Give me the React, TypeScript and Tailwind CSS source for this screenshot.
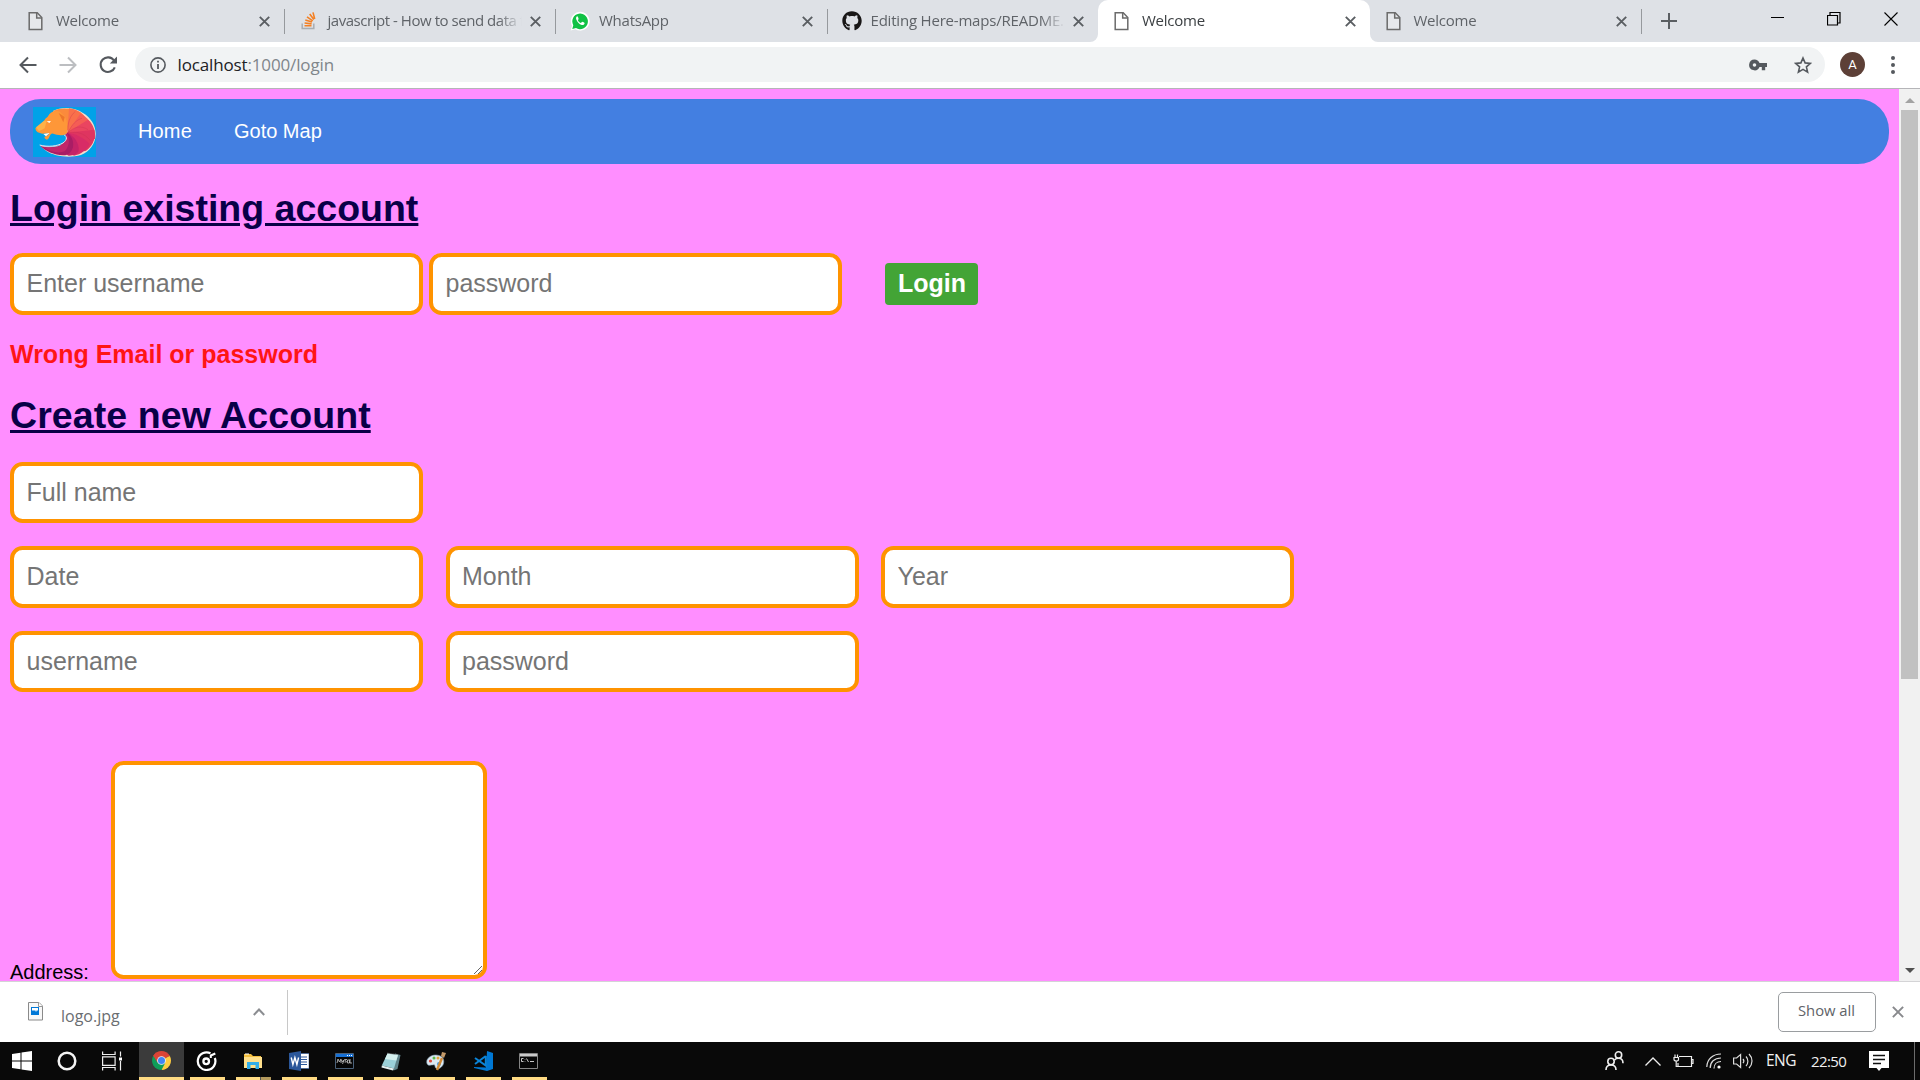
import React from "react";
import { FaGithub } from "react-icons/fa";

const Doc = ({ dark = false }: { dark?: boolean }) => (
  <svg className="-ml-[4px]" width="20" height="20" viewBox="0 0 20 20" fill={dark ? "#fff" : "#e6e8eb"} stroke="#6b6b6b" strokeWidth="1.5">
    <path d="M3.2 1.7h8l4.6 4.8v12H3.2z" />
    <path d="M10.700 1.700v5.200h5" fill="none" />
  </svg>
);

const Close = ({ size = 11, color = "#5a5e62", w = 1.9 }: { size?: number; color?: string; w?: number }) => (
  <svg width={size} height={size} viewBox="0 0 11 11" stroke={color} strokeWidth={w}>
    <path d="M.8.8l9.4 9.4M10.2.8L.8 10.2" />
  </svg>
);

const StackIcon = () => (
  <svg className="-ml-px" width="16" height="18" viewBox="0 0 16 18" fill="none">
    <path d="M1.2 11.5v5h11.6v-5" stroke="#a9adb1" strokeWidth="1.5" />
    <path d="M3.5 13.8h7M3.6 11l7 .9M4.3 8l6.7 2.1M6 4.8l5.8 4M8.7 2l4.2 5.6M12 .4l1.7 6.6" stroke="#f48024" strokeWidth="1.6" />
  </svg>
);

type TabProps = { icon: React.ReactNode; title: string; active?: boolean; sep?: boolean; track?: string };

function Tab({ icon, title, active, sep, track = "tracking-[-0.25px]" }: TabProps) {
  return (
    <div className={`relative flex h-[42px] w-[271.5px] shrink-0 items-center pl-[15px] ${active ? "rounded-t-[10px] bg-white" : ""}`}>
      <span className="flex w-[22px] justify-center">{icon}</span>
      <span
        className={`ml-[2px] h-[22px] w-[199.500px] overflow-hidden pl-[5px] text-[15px] leading-[21px] whitespace-nowrap ${track} ${active ? "text-[#3c4043]" : "text-[#5f6368]"} [mask-image:linear-gradient(to_right,black_88%,transparent_100%)]`}
      >
        {title}
      </span>
      <span className="ml-[8px]"><Close /></span>
      {sep && <span className="absolute top-[9px] -right-px h-[25px] w-px bg-[#96999d]" />}
      {active && (
        <>
          <svg className="absolute bottom-0 -left-[8px]" width="8" height="8"><path d="M8 0v8H0a8 8 0 0 0 8-8z" fill="#fff" /></svg>
          <svg className="absolute -right-[8px] bottom-0" width="8" height="8"><path d="M0 0v8h8a8 8 0 0 1-8-8z" fill="#fff" /></svg>
        </>
      )}
    </div>
  );
}

function TabStrip() {
  return (
    <div className="flex h-[42px] bg-[#dee1e6] pl-[12px]">
      <Tab icon={<Doc />} title="Welcome" sep />
      <Tab icon={<StackIcon />} title="javascript - How to send data from" sep track="tracking-[-0.46px]" />
      <Tab
        icon={
          <svg className="-ml-[2px]" width="20" height="20" viewBox="0 0 20 20">
            <path d="M.6 19.6L2 14.8A9.4 9.4 0 1 1 5.4 18.3z" fill="#fff" />
            <path d="M2.3 17.9l1-3.7a7.8 7.8 0 1 1 2.7 2.8z" fill="#11c245" />
            <path d="M7 5.3c-1 .8-1.2 2-.6 3.4 1 2.5 2.900 4.400 5.300 5.200 1.400.4 2.700-.2 2.900-1.700.1-.6-2.100-1.600-2.500-1.400-.5.3-.8 1.200-1.300 1.100-1.300-.4-2.400-1.500-3-2.700.1-.5.800-.8.800-1.300C8.500 7.200 7.900 5.200 7 5.300z" fill="#fff" />
          </svg>
        }
        title="WhatsApp"
        sep
      />
      <Tab icon={<FaGithub size={20} color="#191717" className="-ml-[2px]" />} title="Editing Here-maps/README.md" track="tracking-[-0.2px]" />
      <Tab icon={<Doc dark />} title="Welcome" active />
      <Tab icon={<Doc />} title="Welcome" sep />
      <svg className="mt-[13px] ml-[20px]" width="16" height="16" stroke="#5a5e62" strokeWidth="2"><path d="M8 0v16M0 8h16" /></svg>
      <svg className="mt-[17px] ml-auto" width="13" height="1"><path d="M0 .5h13" stroke="#000" /></svg>
      <svg className="mt-[12px] ml-[43px]" width="14" height="14" fill="none" stroke="#000">
        <path d="M.5 3.500h10v9.500h-10zM3 3.500v-3h10v10.500h-2.500" strokeWidth="1.200" />
      </svg>
      <svg className="mt-[12px] mr-[22px] ml-[43px]" width="14" height="14" stroke="#000" strokeWidth="1.1"><path d="M.5.5l13 13M13.500.5l-13 13" /></svg>
    </div>
  );
}

function Toolbar() {
  return (
    <div className="flex h-[47px] items-center border-b border-[#b5b5b8] bg-white">
      <svg className="mt-[-1px] ml-[19px]" width="18" height="18" fill="none" stroke="#55595e" strokeWidth="2"><path d="M17.500 9H2M9 1.500L1.500 9 9 16.500" /></svg>
      <svg className="mt-[-1px] ml-[22px]" width="18" height="18" fill="none" stroke="#bcbec1" strokeWidth="2"><path d="M.5 9H16M9 1.500L16.500 9 9 16.500" /></svg>
      <svg className="mt-[-1px] ml-[22px]" width="19" height="18" viewBox="0 0 19 18">
        <path d="M15.800 11.300A7.300 7.300 0 1 1 15 4.500" fill="none" stroke="#55595e" strokeWidth="2.100" />
        <path d="M18 .5v7h-7.200z" fill="#55595e" />
      </svg>
      <div className="mt-[-1px] ml-[17px] flex h-[35px] w-[1690px] items-center rounded-full bg-[#f1f3f4] pl-[15px]">
        <svg width="16" height="16" fill="none" stroke="#55595e"><circle cx="8" cy="8" r="7.100" strokeWidth="1.600" /><path d="M8 3.800v1.800M8 7v5" strokeWidth="1.800" /></svg>
        <span className="ml-[11.5px] text-[17px] leading-[24px] tracking-[-0.14px] text-[#80868b]">
          <span className="text-[#202124]">localhost</span>:1000/login
        </span>
        <svg className="ml-auto" width="18" height="12" viewBox="0 0 18 12" fill="#55595e">
          <path fillRule="evenodd" d="M5.500.5a5.400 5.400 0 1 0 5 7.500h2.300v3.300h3.400V8H18V4h-7.500a5.400 5.400 0 0 0-5-3.500zm0 3.700a1.800 1.800 0 1 1 0 3.600 1.800 1.800 0 0 1 0-3.600z" />
        </svg>
        <svg className="mr-[13px] ml-[27px]" width="18" height="18" viewBox="0 0 18 18" fill="none" stroke="#55595e" strokeWidth="1.600">
          <path d="M9 2l2.100 4.900 5.300.5-4 3.500 1.200 5.200L9 13.400l-4.600 2.700 1.200-5.200-4-3.500 5.300-.5z" />
        </svg>
      </div>
      <div className="mt-[-1px] ml-[15px] flex size-[25px] items-center justify-center rounded-full bg-[#5d4037] font-[Roboto] text-[13px] text-white">A</div>
      <div className="mt-[-1px] ml-[26px] flex flex-col gap-[3px]">
        <i className="size-[4px] rounded-full bg-[#55595e]" />
        <i className="size-[4px] rounded-full bg-[#55595e]" />
        <i className="size-[4px] rounded-full bg-[#55595e]" />
      </div>
    </div>
  );
}

const Lion = () => (
  <svg width="63" height="50" viewBox="0 0 189 150" className="bg-[#00a2e8]">
    <path d="M60 12C85-2 125 0 150 18c25 14 40 42 38 66-1 26-18 50-44 60-36 10-80 4-104-12-10-7-16-12-18-17 20 7 50 6 66-3 14-8 16-20 10-28L70 50z" fill="#f6dccb" />
    <path d="M60 12C85 0 122 3 145 18l-10 30-35 25z" fill="#fb8a3c" />
    <path d="M108 4c25 2 45 18 50 30l-30 30-25 15z" fill="#f9704b" />
    <path d="M142 20c22 10 34 28 38 45l-40 20-38-7z" fill="#f55d55" />
    <path d="M165 38c17 14 23 36 21 58l-44 8-40-27z" fill="#ea4560" />
    <path d="M184 68c7 33-13 57-29 65l-30-20-22-36z" fill="#df3560" />
    <path d="M170 111c-8 17-26 32-48 35l-14-28-5-41c25 3 50 15 67 34z" fill="#d82c66" />
    <path d="M103 77c22 12 36 30 34 55-4 9-16 14-30 14l-30-18z" fill="#c42368" />
    <path d="M103 77c14 12 20 26 17 44-5 16-16 25-30 24-26-2-54-12-68-29 22 8 52 6 67-4 14-9 16-22 8-30z" fill="#a91d65" />
    <path d="M103 80c9 22 4 40-8 53-20 8-46 0-66-14 20 5 48 3 61-7 14-9 16-22 7-29z" fill="#c2266a" />
    <path d="M105 78c18-20 40-23 60-10M105 78c10-25 26-40 42-44M105 78c27-7 52 2 68 24M105 78c-2-30 5-50 22-65" fill="none" stroke="#c8304e" strokeWidth="2" opacity=".5" />
    <path d="M20 114c25 7 52 4 70-6 14-9 14-24-5-27-14 0-24 8-34 17l-16 2-27-8v18z" fill="#00a2e8" />
    <path d="M20 114c25 7 52 4 70-6 14-9 14-23-3-27" fill="none" stroke="#f3e4ea" strokeWidth="3" />
    <path d="M44 29C52 14 68 8 78 13c10 6 13 12 18 16 9 16 5 34 7 48-9 9-18 9-25 7-12 0-18-6-22-4-8 4-4 12-14 18-5-1-7-3-8-8l13-7c-4-6-12-2-19-3l-14-4c-5-4-6-7-7-13 13-4 22-14 30-28z" fill="#fe9738" />
    <path d="M9 61l24-20 8 1-6 22-17 9z" fill="#ffb148" />
    <path d="M41 43l13-1-5 6zM31 81l19-3-11 10z" fill="#fff" />
    <path d="M77 18l18 12-4 16z" fill="#ed762b" />
  </svg>
);

function Field({ placeholder, className = "h-[62px]" }: { placeholder: string; className?: string }) {
  return (
    <input
      placeholder={placeholder}
      className={`block w-[413px] shrink-0 rounded-[12.5px] border-4 border-[#ff9300] bg-white px-[12.5px] pb-[1px] text-[25px] placeholder:text-[#757575] ${className}`}
    />
  );
}

function Page() {
  return (
    <div className="flex h-[892px] font-['Liberation_Sans',sans-serif]">
      <main className="h-[892px] w-[1899px] overflow-hidden bg-[#ff8eff] pt-[10px] pl-[10px] text-[20px] text-black">
        <nav className="flex h-[65px] w-[1879px] items-center rounded-[31px] bg-[#437fe1] pl-[23px] text-white">
          <Lion />
          <a className="mt-[-1px] ml-[42px] tracking-[0.15px]">Home</a>
          <a className="mt-[-1px] ml-[42px]">Goto Map</a>
        </nav>
        <h1 className="mt-[22px] h-[44px] text-[37.5px] leading-[44px] font-bold text-[#090047] underline">Login existing account</h1>
        <div className="mt-[23px] flex items-center">
          <Field placeholder="Enter username" />
          <Field placeholder="password" className="ml-[6px] h-[62px]" />
          <button className="ml-[43px] h-[42px] w-[93px] rounded-[4px] bg-[#43a436] pb-[1px] pl-[1px] text-[25px] leading-[41px] font-bold text-white">Login</button>
        </div>
        <p className="mt-[25px] h-[28px] text-[25px] leading-[28px] font-bold text-[#ff1515]">Wrong Email or password</p>
        <h1 className="mt-[25px] h-[44px] text-[37.5px] leading-[44px] font-bold tracking-[0.09px] text-[#090047] underline">Create new Account</h1>
        <Field placeholder="Full name" className="mt-[25px] h-[61px]" />
        <div className="mt-[23px] flex gap-[22.5px]">
          <Field placeholder="Date" />
          <Field placeholder="Month" />
          <Field placeholder="Year" />
        </div>
        <div className="mt-[23px] flex gap-[22.5px]">
          <Field placeholder="username" className="h-[61px]" />
          <Field placeholder="password" className="h-[61px]" />
        </div>
        <div className="mt-[69px] flex items-end">
          <span className="mb-[-5px] w-[101px] leading-[23px]">Address:</span>
          <div className="flex h-[218px] w-[376px] items-end justify-end rounded-[12.5px] border-4 border-[#ff9300] bg-white">
            <svg className="mr-[1px] mb-[1px]" width="8" height="8" stroke="#555" strokeWidth=".9"><path d="M0 8L8 0M4 8L8 4" /></svg>
          </div>
        </div>
      </main>
      <div className="flex w-[21px] flex-col items-center bg-[#f1f1f1]">
        <svg className="mt-[9px]" width="10" height="5"><path d="M0 5L5 0l5 5z" fill="#a3a3a3" /></svg>
        <div className="mt-[7px] h-[569px] w-[17px] bg-[#c1c1c1]" />
        <svg className="mt-auto mb-[8px]" width="10" height="5"><path d="M0 0l5 5 5-5z" fill="#505050" /></svg>
      </div>
    </div>
  );
}

function DownloadBar() {
  return (
    <div className="flex h-[61px] items-center border-t border-[#d4d4d6] bg-white">
      <svg className="ml-[28px] self-start translate-y-[20px]" width="15" height="19" viewBox="0 0 15 19">
        <path d="M.5.5h10.500l3.500 3.500v14H.5z" fill="#f8f8f8" stroke="#8a8a8a" />
        <path d="M10.500.5v4h4" fill="#fff" stroke="#999" />
        <path d="M3 5h8v8H3z" fill="#0078d7" />
        <path d="M4 6h6v3l-1-1-1 2-1-2-1 1-1-1-1 1z" fill="#fff" />
      </svg>
      <span className="mt-[7px] ml-[18px] w-[62px] text-[16px] leading-[24px] text-[#6a6d71]">logo.jpg</span>
      <svg className="ml-[130px]" width="12" height="8" fill="none" stroke="#8b8d91" strokeWidth="2"><path d="M.8 7L6 1.500 11.200 7" /></svg>
      <span className="ml-[22px] h-[45px] w-px bg-[#c8c8c8]" />
      <button className="mb-px ml-auto h-[40px] w-[98px] rounded-[5px] border border-[#9a9da0] pr-px pb-[2px] text-[14.800px] text-[#5f6368]">Show all</button>
      <span className="mr-[16px] ml-[16px]"><Close size={12} color="#88898c" w={1.8} /></span>
    </div>
  );
}

function TaskApp({ children, last = false, half = false }: { children: React.ReactNode; last?: boolean; half?: boolean }) {
  return (
    <div className={`flex h-[38px] w-[35px] flex-col items-center justify-between ${last ? "" : "mr-[11px]"}`}>
      <div className="flex h-[35px] items-center pt-[3px] pr-[2px]">{children}</div>
      <div className="flex h-[3px] w-full bg-[#ffdb83]">{half && <i className="ml-auto h-[3px] w-[11px] border-l border-[#555] bg-[#b49a5d]" />}</div>
    </div>
  );
}

function Taskbar() {
  return (
    <div className="flex h-[38px] items-center bg-[#090909] text-[#f0f0f0]">
      <svg className="ml-[12px]" width="20" height="20" fill="#fff"><path d="M0 3l8.500-1.200v7.700H0zM9.500 1.600L20 0v9.500H9.500zM0 10.500h8.500v7.700L0 17zM9.500 10.500H20V20L9.500 18.400z" /></svg>
      <svg className="ml-[25px]" width="20" height="20" fill="none"><circle cx="10" cy="10" r="8.300" stroke="#f4f4f4" strokeWidth="2.500" /></svg>
      <svg className="ml-[25px]" width="21" height="20" fill="none" stroke="#eee" strokeWidth="1.200"><path d="M.6.500v3h12.500v-3M.6 5.800h12.500v8.500H.6zM.6 19.500v-3h12.500v3M18.500.5v5M18.500 10v9.500" /><path d="M17 6.500h3v3h-3z" fill="#fff" stroke="none" /></svg>
      <div className="mr-[6px] ml-[16px] flex h-[38px] w-[45px] flex-col items-center justify-between bg-[#3b3b3b]">
        <svg className="mt-[9px] mr-px" width="19" height="19" viewBox="0 0 20 20">
          <path d="M10 10L1.340 5A10 10 0 0 1 18.660 5z" fill="#db4437" />
          <path d="M10 10L18.660 5A10 10 0 0 1 10 20z" fill="#ffcd40" />
          <path d="M10 10V20A10 10 0 0 1 1.340 5z" fill="#0f9d58" />
          <path d="M10 5.400h8.900L18.600 5 10 2z" fill="#db4437" />
          <path d="M6 12.300L1.340 5l3-3.200L8 6z" fill="#db4437" />
          <path d="M14 12.300L10 20 7 18l3-5z" fill="#0f9d58" />
          <circle cx="10" cy="10" r="4.600" fill="#f1f1f1" /><circle cx="10" cy="10" r="3.700" fill="#4285f4" />
        </svg>
        <div className="h-[3px] w-full bg-[#ffdb83]" />
      </div>
      <TaskApp>
        <svg width="21" height="20" viewBox="0 0 21 20" fill="none" stroke="#fff"><path d="M14.500 2.300A8.800 8.800 0 1 0 18.800 7" strokeWidth="2.200" /><circle cx="10.200" cy="10.300" r="2.800" strokeWidth="2.300" /><path d="M14.800 7V4.500l4.500-2" strokeWidth="2" /></svg>
      </TaskApp>
      <TaskApp half>
        <svg width="18" height="17" viewBox="0 0 18 17"><path d="M0 1h7l2 2h8v11H0z" fill="#f2be3f" /><path d="M0 4h18v11H0z" fill="#ffe08c" /><path d="M3 9h12v7h-3.500v-4h-5v4H3z" fill="#33aee8" /><path d="M1 1h4" stroke="#fff" /></svg>
      </TaskApp>
      <TaskApp>
        <svg width="20" height="20" viewBox="0 0 20 20"><path d="M10 2.500h10v15H10z" fill="#fff" stroke="#2b579a" strokeWidth=".6" /><path d="M12 6h6M12 8.500h6M12 11h6M12 13.500h6" stroke="#2b579a" strokeWidth="1.200" /><path d="M0 2l12-2v20L0 18z" fill="#2b579a" /><path d="M2.200 6.500l1.700 7 2-7 2 7 1.700-7" fill="none" stroke="#fff" strokeWidth="1.400" /></svg>
      </TaskApp>
      <TaskApp>
        <svg width="19" height="16" viewBox="0 0 19 16"><path d="M.5.5h18v15H.5z" fill="#050505" stroke="#4a6078" /><path d="M1 1h17v3H1z" fill="#1670d5" /><path d="M12 2.500h1M14 2.500h1M16 2.500h1" stroke="#fff" /><path d="M2 10l1-4 1.500 3L6 6v4M6.500 7l1 2 1.500-2-1.500 4M12 6.500H9.500L11.500 9H9.500M12.500 7h2v3h-2zM15 6v4h2" fill="none" stroke="#c8c8c8" strokeWidth=".8" /></svg>
      </TaskApp>
      <TaskApp>
        <svg width="20" height="19" viewBox="0 0 20 19"><path d="M14 1.500l5.500 1.500-3 14-4 1.500z" fill="#5f8289" /><path d="M6.500 1.500L17 3l-4 13.500L.8 13.500z" fill="#9bd0d8" /><path d="M6.500 1.500L17 3l-1.700 5.500L4 7z" fill="#d4f0ee" /><path d="M.8 13.500L13 16.500l-1 2-11.500-3z" fill="#e3eff0" /><path d="M6.500 1.200L17 2.700" stroke="#888" strokeDasharray="1 1" /></svg>
      </TaskApp>
      <TaskApp>
        <svg width="21" height="20" viewBox="0 0 21 20"><path d="M1 9c3-6 11-6 15-3 3 3 2 9-2 11-3 2-5 0-5-2s-2-1-4-1c-3 1-5-1-4-5z" fill="#dce9f2" stroke="#8ba6ba" strokeWidth=".6" /><circle cx="4.500" cy="10" r="1.600" fill="#df4638" /><circle cx="8" cy="7" r="1.500" fill="#5db94d" /><circle cx="12" cy="7" r="1.500" fill="#e6a63e" /><circle cx="13" cy="13" r="2" fill="#4599df" /><path d="M11 19l5-12" stroke="#d18a36" strokeWidth="2.500" /><path d="M15 5l1-4 4 1-2 5z" fill="#c49a69" /></svg>
      </TaskApp>
      <TaskApp>
        <svg width="20" height="20" viewBox="0 0 20 20"><path d="M14 0l6 2v16l-6 2-13-3v-1l12 .500z" fill="#0078d4" /><path d="M12.800 5v9.500L2 7M2 13l10.800-8" fill="none" stroke="#0b84d8" strokeWidth="2" /></svg>
      </TaskApp>
      <TaskApp last>
        <svg width="19" height="16" viewBox="0 0 19 16"><path d="M.5.5h18v15H.5z" fill="#060606" stroke="#858585" /><path d="M1 1h17v2.500H1z" fill="#c9c9c9" /><path d="M4.500 5.500H2.500v3h2M6 6v.5M6 8v.5M7.500 5.500l2 3.500M11 8.500h4" fill="none" stroke="#ddd" strokeWidth=".9" /></svg>
      </TaskApp>
      <svg className="ml-auto" width="19" height="20" viewBox="0 0 19 20" fill="none" stroke="#eee" strokeWidth="1.600"><circle cx="13.500" cy="4" r="3.200" /><circle cx="6" cy="10.500" r="3.200" /><path d="M1 19c0-3 2-5 5-5s5 2 5 5M9.500 9c1-1.300 2-1.800 4-1.800 3 0 4.500 2 4.500 5" /></svg>
      <svg className="ml-[21px]" width="16" height="9" fill="none" stroke="#eee" strokeWidth="1.300"><path d="M.5 8.500L8 1l7.500 7.500" /></svg>
      <svg className="ml-[12px]" width="21" height="14" viewBox="0 0 21 14" fill="none" stroke="#eee" strokeWidth="1.200"><path d="M6 2.500h12.500v10H5V9M18.500 5.500h1.500v4h-1.500M1 3.500h4.500v2c0 2-4.500 2-4.500 0zM2 3V.5M4.500 3V.5M3.200 7v5.500H5" /></svg>
      <svg className="ml-[12px]" width="16" height="16" viewBox="0 0 16 16" fill="none" stroke="#ddd" strokeWidth="1.200"><path d="M.8 14C1 6 7 1 15 1M4.200 15c0-6 4-10 10.800-10M8 15.500C8 11 11 8.500 15 8.500" /><circle cx="13" cy="14" r="1.600" fill="#fff" stroke="none" /></svg>
      <svg className="ml-[11px]" width="21" height="18" viewBox="0 0 21 18" fill="none" stroke="#ddd" strokeWidth="1.200"><path d="M.6 6v6h3l4 3.500v-13L3.600 6zM10 7c1 1.200 1 3 0 4.200M13 4.500c2.500 2.500 2.500 7 0 9.500M16 2c4 4 4 10 0 14" /></svg>
      <span className="ml-[12px] w-[45px] text-[15.500px] tracking-[-0.5px]">ENG</span>
      <span className="w-[58px] text-[15px] tracking-[-0.6px]">22:50</span>
      <svg width="20" height="20" viewBox="0 0 20 20"><path d="M0 0h20v17h-7.500L10 20l-2.500-3H0z" fill="#fff" /><path d="M4 4.500h12M4 8.500h12M4 12.500h8" stroke="#111" strokeWidth="1.300" /></svg>
      <span className="mr-[5px] ml-[25px] h-[38px] w-px bg-[#6b6b6b]" />
    </div>
  );
}

export default function App() {
  return (
    <div className="h-[1080px] w-[1920px] overflow-hidden bg-white font-['Open_Sans',sans-serif]">
      <TabStrip />
      <Toolbar />
      <Page />
      <DownloadBar />
      <Taskbar />
    </div>
  );
}
